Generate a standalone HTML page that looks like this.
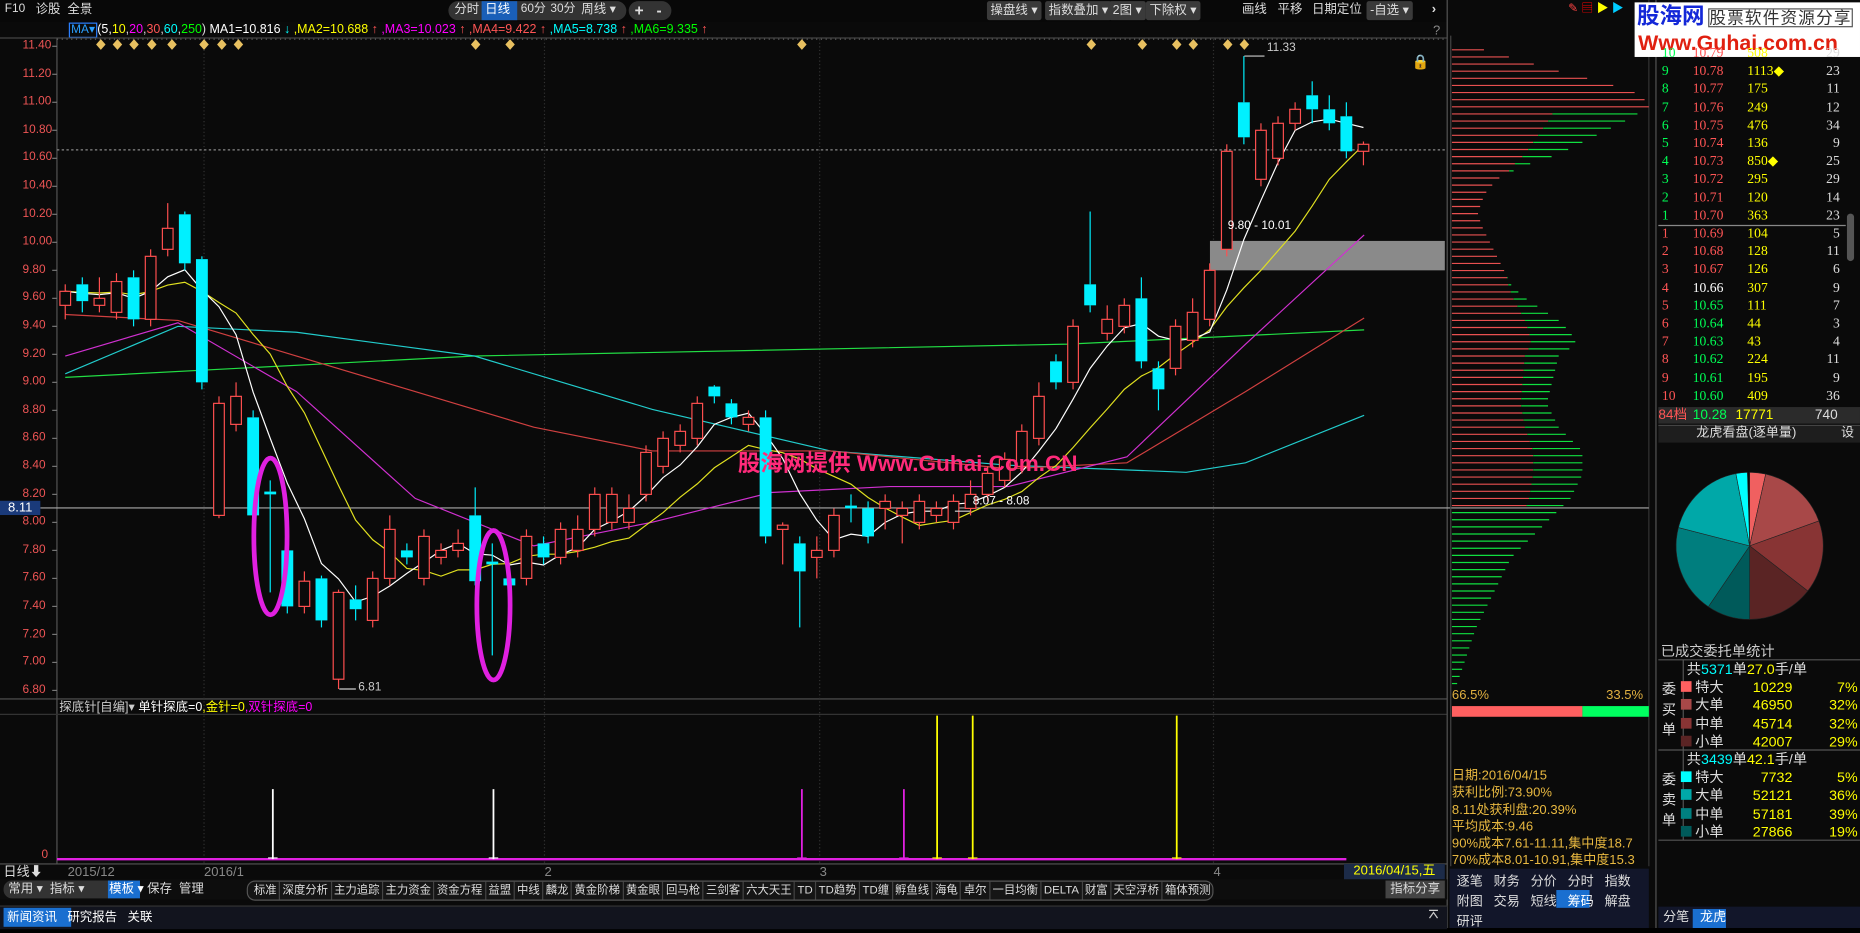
<!DOCTYPE html>
<html><head><meta charset="utf-8">
<style>
html,body{margin:0;padding:0;background:#000;overflow:hidden;width:1860px;height:928px}
#w{position:absolute;left:0;top:0;width:1568px;height:782px;transform:scale(1.18622,1.1867);transform-origin:0 0;background:#0a0a0a;font-family:"Liberation Sans","Noto Sans CJK SC",sans-serif;font-size:11px;color:#ddd}
.a{position:absolute;white-space:nowrap;line-height:1}
.btn{position:absolute;top:1px;height:16px;line-height:16px;background:#3a3a3a;color:#ddd;padding:0 3px;border-radius:2px;font-size:10.5px}
.tab{display:inline-block;border-right:1px solid #444;padding:0 2px;height:15px;line-height:15px}
</style></head><body><div id="w">
<div class="a" style="left:0;top:0;width:1220px;height:18px;background:#080808"></div>
<div class="a" style="left:4px;top:3px;color:#ddd;font-size:10px">F10</div>
<div class="a" style="left:30px;top:3px;font-size:10.5px">诊股&nbsp;&nbsp;全景</div>
<div class="a" style="left:378px;top:1px;width:150px;height:16px;background:#333;border-radius:8px"></div>
<div class="a" style="left:383px;top:3px;font-size:10.5px">分时</div>
<div class="a" style="left:406px;top:1px;width:30px;height:16px;background:#1a5fb8"></div>
<div class="a" style="left:409px;top:3px;color:#fff;font-size:10.5px">日线</div>
<div class="a" style="left:439px;top:3px;font-size:10px">60分</div>
<div class="a" style="left:464px;top:3px;font-size:10px">30分</div>
<div class="a" style="left:490px;top:3px;font-size:10.5px">周线 ▾</div>
<div class="a" style="left:530px;top:1px;width:36px;height:16px;background:#333;border-radius:8px"></div>
<div class="a" style="left:535px;top:2px;font-weight:bold;font-size:13px">+&nbsp;&nbsp;&nbsp;-</div>
<div class="btn" style="left:832px">操盘线 ▾</div>
<div class="btn" style="left:881px">指数叠加 ▾</div>
<div class="btn" style="left:935px">2图 ▾</div>
<div class="btn" style="left:966px">下除权 ▾</div>
<div class="a" style="left:1047px;top:3px;font-size:10.5px">画线</div>
<div class="a" style="left:1077px;top:3px;font-size:10.5px">平移</div>
<div class="a" style="left:1106px;top:3px;font-size:10.5px">日期定位</div>
<div class="btn" style="left:1152px">-自选 ▾</div>
<div class="a" style="left:1207px;top:3px;font-weight:bold">›</div>
<div class="a" style="left:1208px;top:21px;color:#888">?</div>
<div class="a" style="left:58px;top:19px;border:1px solid #2a7fff;color:#2a9fff;padding:0 1px;height:11px;line-height:11px;font-size:10px">MA▾</div>
<div class="a" style="left:82px;top:20px;font-size:10.5px"><span style="color:#fff">(5,</span><span style="color:#ff0">10</span>,<span style="color:#f0f">20</span>,<span style="color:#f55">30</span>,<span style="color:#0ff">60</span>,<span style="color:#0f0">250</span>) <span style="color:#fff">MA1=10.816</span> <span style="color:#0ff">↓</span> <span style="color:#ff0">,MA2=10.688</span> <span style="color:#f55">↑</span> <span style="color:#f0f">,MA3=10.023</span> <span style="color:#f55">↑</span> <span style="color:#f55">,MA4=9.422</span> <span style="color:#f55">↑</span> <span style="color:#0ff">,MA5=8.738</span> <span style="color:#f55">↑</span> <span style="color:#0f0">,MA6=9.335</span> <span style="color:#f55">↑</span></div>

<svg id="sv" class="a" style="left:0;top:0" width="1568" height="782" viewBox="0 0 1568 782"></svg>

<div id="ax"></div>
<div class="a" style="left:0;top:422px;width:34px;height:12px;background:#1a3a7a;color:#fff;text-align:center;line-height:12px">8.11</div>
<div class="a" style="left:1035px;top:186px;color:#fff;font-size:10px">9.80 - 10.01</div>
<div class="a" style="left:820px;top:418px;color:#fff;font-size:10px">8.07 - 8.08</div>
<div class="a" style="left:302px;top:575px;color:#ccc;font-size:10px">6.81</div>
<div class="a" style="left:1068px;top:36px;color:#ccc;font-size:10px">11.33</div>
<div class="a" style="left:622px;top:382px;color:#ff2a7a;font-size:19px;font-weight:bold">股海网提供 Www.Guhai.Com.CN</div>
<div class="a" style="left:1190px;top:46px;color:#fff;font-size:12px">🔒</div>

<div class="a" style="left:50px;top:591px;font-size:10.5px"><span style="color:#ccc">探底针[自编]▾</span> <span style="color:#fff">单针探底=0</span><span style="color:#ff0">,金针=0</span><span style="color:#f0f">,双针探底=0</span></div>
<div class="a" style="left:35px;top:716px;color:#e55;font-size:10px">0</div>
<div class="a" style="left:3px;top:730px">日线⬇</div>
<div class="a" style="left:57px;top:730px;color:#888">2015/12</div>
<div class="a" style="left:172px;top:730px;color:#888">2016/1</div>
<div class="a" style="left:459px;top:730px;color:#888">2</div>
<div class="a" style="left:691px;top:730px;color:#888">3</div>
<div class="a" style="left:1023px;top:730px;color:#888">4</div>
<div class="a" style="left:1133px;top:728px;width:85px;height:13px;background:#1c2b48;color:#ff0;text-align:center;line-height:13px">2016/04/15,五</div>
<div class="a" style="left:0;top:741px;width:1220px;height:17px;background:#0d0d0d"></div>
<div class="a" style="left:3px;top:742px;width:116px;height:15px;background:#333;border-radius:7px"></div>
<div class="a" style="left:7px;top:744px;font-size:10.5px">常用 ▾&nbsp; 指标 ▾</div>
<div class="a" style="left:91px;top:742px;width:27px;height:15px;background:#1a6fd0"></div>
<div class="a" style="left:92px;top:744px;color:#fff;font-size:10.5px">模板 ▾</div>
<div class="a" style="left:124px;top:744px;font-size:10.5px">保存&nbsp; 管理</div>
<div class="a" style="left:208px;top:742px;height:15px;border:1px solid #555;border-radius:7px;background:#151515;font-size:9.6px;color:#ddd;padding-left:3px"><span class="tab">标准</span><span class="tab">深度分析</span><span class="tab">主力追踪</span><span class="tab">主力资金</span><span class="tab">资金方程</span><span class="tab">益盟</span><span class="tab">中线</span><span class="tab">麟龙</span><span class="tab">黄金阶梯</span><span class="tab">黄金眼</span><span class="tab">回马枪</span><span class="tab">三剑客</span><span class="tab">六大天王</span><span class="tab">TD</span><span class="tab">TD趋势</span><span class="tab">TD缠</span><span class="tab">孵鱼线</span><span class="tab">海龟</span><span class="tab">卓尔</span><span class="tab">一目均衡</span><span class="tab">DELTA</span><span class="tab">财富</span><span class="tab">天空浮桥</span><span class="tab" style="border:none">箱体预测</span></div>
<div class="a" style="left:1168px;top:742px;width:50px;height:15px;background:#444;line-height:15px;text-align:center;font-size:10.5px">指标分享</div>
<div class="a" style="left:0;top:763px;width:1220px;height:19px;background:#12141e;border-top:1px solid #333"></div>
<div class="a" style="left:3px;top:765px;width:57px;height:16px;background:#1a6fd0"></div>
<div class="a" style="left:6px;top:768px;color:#fff;font-size:10.5px">新闻资讯&nbsp;&nbsp; 研究报告&nbsp;&nbsp; 关联</div>
<div class="a" style="left:1203px;top:766px;color:#ccc;font-weight:bold">⌅</div>

<div class="a" style="left:1224px;top:581px;color:#e0b040">66.5%</div>
<div class="a" style="left:1354px;top:581px;color:#e0b040">33.5%</div>
<div class="a" style="left:1224px;top:647px;color:#e8b840;font-size:11px;line-height:14.3px">日期:2016/04/15<br>获利比例:73.90%<br>8.11处获利盘:20.39%<br>平均成本:9.46<br>90%成本7.61-11.11,集中度18.7<br>70%成本8.01-10.91,集中度15.3</div>
<div class="a" style="left:1222px;top:732px;width:168px;height:50px;background:#12162a"></div>
<div class="a" style="left:1312px;top:750px;width:28px;height:15px;background:#1a6fd0"></div>
<div class="a" style="left:1228px;top:735px;line-height:17px;font-size:11px">逐笔&nbsp;&nbsp; 财务&nbsp;&nbsp; 分价&nbsp;&nbsp; 分时&nbsp;&nbsp; 指数<br>附图&nbsp;&nbsp; 交易&nbsp;&nbsp; 短线&nbsp;&nbsp; <span style="color:#fff">筹码</span>&nbsp;&nbsp; 解盘<br>研评</div>

<div class="a" style="left:1378px;top:2px;width:190px;height:46px;background:#fff"></div>
<div class="a" style="left:1380px;top:5px;color:#1428d8;font-size:19px;font-weight:bold">股海网</div>
<div class="a" style="left:1440px;top:7px;color:#333;font-size:14px;border:1px solid #555;letter-spacing:1px">股票软件资源分享</div>
<div class="a" style="left:1381px;top:27px;color:#e02010;font-size:18px;font-weight:bold">Www.Guhai.com.cn</div>
<div class="a" style="left:1322px;top:3px;color:#f44;font-size:10px">✎ <span style="color:#f00">▤</span> <span style="color:#ff0">▶</span> <span style="color:#0cf">▶</span></div>

<div id="ob"></div>
<div class="a" style="left:1398px;top:343px;width:170px;height:14px;background:#2b2b2b"></div>
<div class="a" style="left:1398px;top:345px;color:#f55;font-size:11.5px">84档</div>
<div class="a" style="left:1427px;top:345px;color:#0f5;font-size:11.5px">10.28</div>
<div class="a" style="left:1463px;top:345px;color:#ff0;font-size:11.5px">17771</div>
<div class="a" style="left:1530px;top:345px;color:#ddd;font-size:11.5px">740</div>
<div class="a" style="left:1398px;top:358px;width:170px;height:14px;background:#1e1e1e;border-top:1px solid #444"></div>
<div class="a" style="left:1430px;top:360px;color:#ddd">龙虎看盘(逐单量)</div>
<div class="a" style="left:1552px;top:360px;color:#ddd">设</div>
<div class="a" style="left:1400px;top:543px;color:#ccc;font-size:12px">已成交委托单统计</div>
<div id="st"></div>
<div class="a" style="left:1398px;top:764px;width:170px;height:18px;background:#12162a"></div>
<div class="a" style="left:1427px;top:766px;width:28px;height:16px;background:#1a6fd0"></div>
<div class="a" style="left:1402px;top:768px;color:#ddd">分笔&nbsp;&nbsp; <span style="color:#fff">龙虎</span></div>

<script>
var sv=document.getElementById('sv'),h='';
function Y(p){return 39+(11.4-p)*118;}
h+='<rect x="0" y="32" width="1220" height="696" fill="#0a0a0a"/>';
h+='<line x1="48" y1="32" x2="48" y2="728" stroke="#555"/>';
h+='<line x1="0" y1="32" x2="1220" y2="32" stroke="#444"/>';
h+='<line x1="48" y1="33" x2="1218" y2="33" stroke="#666" stroke-dasharray="1,3"/>';
h+='<line x1="0" y1="589" x2="1220" y2="589" stroke="#555"/>';
h+='<line x1="0" y1="602" x2="1220" y2="602" stroke="#333"/>';
h+='<line x1="0" y1="728" x2="1220" y2="728" stroke="#555"/>';
h+='<line x1="1220" y1="0" x2="1220" y2="782" stroke="#555"/>';
h+='<line x1="1396" y1="0" x2="1396" y2="782" stroke="#555"/>';
h+='<line x1="1390" y1="0" x2="1390" y2="730" stroke="#333"/>';
[172,459,691,1023].forEach(function(x){h+='<line x1="'+x+'" y1="33" x2="'+x+'" y2="728" stroke="#333" stroke-dasharray="1,2"/>';});
var ax='';
for(var i=0;i<=23;i++){var p=11.4-i*0.2,y=Y(p);ax+='<div class="a" style="left:19px;top:'+(y-5)+'px;color:#e55;font-size:10px">'+p.toFixed(2)+'</div>';h+='<line x1="44" y1="'+y+'" x2="48" y2="'+y+'" stroke="#777"/>';}
document.getElementById('ax').innerHTML=ax;
h+='<rect x="1020" y="'+Y(10.01)+'" width="198" height="'+(Y(9.8)-Y(10.01))+'" fill="#8a8a8a"/>';
h+='<line x1="48" y1="'+Y(10.66)+'" x2="1218" y2="'+Y(10.66)+'" stroke="#888" stroke-dasharray="2,2"/>';
h+='<line x1="34" y1="428" x2="1390" y2="428" stroke="#aaa"/>';
var C=[[9.55,9.65,9.7,9.45],[9.7,9.58,9.75,9.5],[9.55,9.6,9.75,9.5],[9.5,9.72,9.78,9.45],[9.75,9.45,9.8,9.4],[9.45,9.9,9.95,9.4],[9.95,10.1,10.28,9.9],[10.2,9.85,10.22,9.8],[9.88,9.0,9.9,8.95],[8.05,8.85,8.9,8.03],[8.7,8.9,9.0,8.65],[8.75,8.05,8.8,8.0],[8.22,8.2,8.3,7.5],[7.8,7.4,7.85,7.35],[7.4,7.58,7.65,7.35],[7.6,7.3,7.62,7.25],[6.88,7.5,7.52,6.81],[7.45,7.38,7.55,7.3],[7.3,7.6,7.65,7.25],[7.6,7.95,8.05,7.55],[7.8,7.75,7.85,7.7],[7.6,7.9,7.95,7.55],[7.75,7.8,7.85,7.7],[7.8,7.85,7.95,7.75],[8.05,7.58,8.25,7.55],[7.72,7.7,7.85,7.05],[7.6,7.55,7.65,7.45],[7.6,7.9,7.95,7.55],[7.85,7.75,7.9,7.7],[7.75,7.95,8.0,7.7],[7.8,7.95,8.05,7.75],[7.95,8.2,8.25,7.9],[8.0,8.2,8.25,7.95],[8.0,8.1,8.2,7.95],[8.2,8.5,8.55,8.15],[8.4,8.6,8.65,8.35],[8.55,8.65,8.7,8.5],[8.6,8.85,8.9,8.55],[8.97,8.9,8.98,8.85],[8.85,8.75,8.88,8.7],[8.7,8.75,8.8,8.65],[8.75,7.9,8.8,7.85],[7.95,7.98,8.0,7.7],[7.85,7.65,7.9,7.25],[7.75,7.8,7.9,7.6],[7.8,8.05,8.1,7.75],[8.12,8.1,8.2,8.0],[8.1,7.9,8.15,7.85],[8.1,8.15,8.2,7.95],[8.05,8.1,8.15,7.85],[8.0,8.15,8.2,7.95],[8.05,8.1,8.15,8.0],[8.0,8.15,8.2,7.95],[8.1,8.2,8.3,8.05],[8.2,8.35,8.4,8.15],[8.3,8.45,8.5,8.25],[8.4,8.65,8.7,8.35],[8.6,8.9,9.0,8.55],[9.15,9.0,9.2,8.95],[9.0,9.4,9.45,8.95],[9.7,9.55,10.22,9.5],[9.35,9.45,9.55,9.3],[9.4,9.55,9.6,9.35],[9.6,9.15,9.75,9.1],[9.1,8.95,9.15,8.8],[9.1,9.4,9.45,9.05],[9.3,9.5,9.6,9.25],[9.45,9.8,9.85,9.4],[9.95,10.65,10.7,9.9],[11.0,10.75,11.33,10.7],[10.45,10.8,10.85,10.4],[10.6,10.85,10.9,10.55],[10.85,10.95,11.0,10.8],[11.05,10.95,11.15,10.85],[10.95,10.85,11.05,10.8],[10.9,10.65,11.0,10.6],[10.65,10.7,10.72,10.55]];
function X(i){return 55+14.4*i;}
function pl(pts,col){h+='<polyline fill="none" stroke="'+col+'" stroke-width="1" points="'+pts.map(function(p){return p[0]+','+p[1]}).join(' ')+'"/>';}
pl([[55,318],[400,300],[900,290],[1150,278]],'#22dd44');
pl([[55,315],[150,275],[250,280],[400,300],[550,345],[700,380],[850,392],[1000,398],[1050,390],[1150,350]],'#22cccc');
pl([[55,265],[150,270],[250,300],[350,330],[450,360],[550,380],[700,380],[850,395],[950,390],[1050,330],[1150,268]],'#d04040');
pl([[55,300],[150,272],[250,330],[350,420],[450,460],[550,440],[650,415],[750,410],[850,410],[950,385],[1050,290],[1150,198]],'#d030d0');
function ma(n){var pts=[];for(var i=0;i<C.length;i++){var s=0;for(var k=0;k<n;k++){var j=i-k;s+=C[Math.max(j,0)][1];}pts.push([X(i),Y(s/n)]);}return pts;}
pl(ma(10),'#e0e020');pl(ma(5),'#ffffff');
C.forEach(function(c,i){var x=X(i),o=c[0],cl=c[1],up=cl>=o,col=up?'#ff4f4f':'#00f0ff';
var t=Y(Math.max(o,cl)),b=Y(Math.min(o,cl));if(b-t<1)b=t+1;
h+='<line x1="'+x+'" y1="'+Y(c[2])+'" x2="'+x+'" y2="'+t+'" stroke="'+col+'"/>';
h+='<line x1="'+x+'" y1="'+b+'" x2="'+x+'" y2="'+Y(c[3])+'" stroke="'+col+'"/>';
if(up)h+='<rect x="'+(x-4.5)+'" y="'+t+'" width="9" height="'+(b-t)+'" fill="#0a0a0a" stroke="'+col+'"/>';
else h+='<rect x="'+(x-5)+'" y="'+t+'" width="10" height="'+(b-t)+'" fill="'+col+'"/>';});
h+='<line x1="286" y1="'+Y(6.81)+'" x2="300" y2="'+Y(6.81)+'" stroke="#ccc"/>';
h+='<line x1="1049" y1="'+Y(11.33)+'" x2="1066" y2="'+Y(11.33)+'" stroke="#ccc"/>';
h+='<line x1="805" y1="'+Y(8.08)+'" x2="818" y2="'+Y(8.08)+'" stroke="#ccc"/>';
[85,99,113,128,145,172,187,201,401,430,676,920,963,992,1006,1035,1049].forEach(function(x){h+='<polygon points="'+x+',33 '+(x+4)+',37.5 '+x+',42 '+(x-4)+',37.5" fill="#e8c060"/>';});
h+='<ellipse cx="228" cy="452" rx="14" ry="66" fill="none" stroke="#e020e0" stroke-width="4"/>';
h+='<ellipse cx="416" cy="510" rx="14" ry="63" fill="none" stroke="#e020e0" stroke-width="4"/>';
h+='<line x1="48" y1="724" x2="1135" y2="724" stroke="#e020e0" stroke-width="2"/>';
[[230,665,'#fff'],[416,665,'#fff'],[676,665,'#e020e0'],[762,665,'#e020e0'],[790,603,'#ff0'],[820,603,'#ff0'],[992,603,'#ff0']].forEach(function(b){h+='<line x1="'+b[0]+'" y1="'+b[1]+'" x2="'+b[0]+'" y2="724" stroke="'+b[2]+'" stroke-width="1.5"/>';h+='<line x1="'+(b[0]-4)+'" y1="723" x2="'+(b[0]+4)+'" y2="723" stroke="'+b[2]+'"/>';});
var prof=[[40,20],[50,55],[60,90],[70,130],[80,160],[90,166],[100,150],[110,130],[120,110],[130,90],[140,60],[150,40],[160,30],[170,25],[180,22],[190,25],[200,30],[210,35],[220,40],[230,45],[240,50],[250,60],[260,75],[270,90],[280,100],[290,105],[300,90],[320,85],[340,80],[360,90],[380,110],[400,110],[420,100],[430,90],[450,70],[470,50],[500,35],[530,20],[560,10],[580,3]];
function L(y){for(var k=0;k<prof.length-1;k++){if(y>=prof[k][0]&&y<=prof[k+1][0]){var f=(y-prof[k][0])/(prof[k+1][0]-prof[k][0]);return prof[k][1]+f*(prof[k+1][1]-prof[k][1]);}}return 0;}
h+='<line x1="1223" y1="30" x2="1223" y2="730" stroke="#444"/>';
for(var y=42;y<=580;y+=6){var l=L(y),r=y<92?l:(y<428?Math.min(l,30+l*0.35):0);
if(r>0)h+='<line x1="1224" y1="'+y+'" x2="'+(1224+r)+'" y2="'+y+'" stroke="#e85050"/>';
if(l>r)h+='<line x1="'+(1224+r)+'" y1="'+y+'" x2="'+(1224+l)+'" y2="'+y+'" stroke="#10e040"/>';}
h+='<rect x="1224" y="595" width="110" height="9" fill="#ff6060"/><rect x="1334" y="595" width="56" height="9" fill="#00ff60"/>';
h+='<rect x="1557" y="180" width="6" height="40" rx="3" fill="#555"/>';
var sl=[[3.5,'#f06060'],[16,'#a84848'],[16,'#883434'],[14.5,'#5a2424'],[9.5,'#005a5a'],[19.5,'#007e7e'],[18,'#00a8a8'],[2.5,'#00ffff']];
var a0=-Math.PI/2,cx=1475,cy=460,R=62;
sl.forEach(function(s){var a1=a0+s[0]/100*2*Math.PI;var x0=cx+R*Math.cos(a0),y0=cy+R*Math.sin(a0),x1=cx+R*Math.cos(a1),y1=cy+R*Math.sin(a1);h+='<path d="M'+cx+','+cy+' L'+x0+','+y0+' A'+R+','+R+' 0 '+((a1-a0)>Math.PI?1:0)+',1 '+x1+','+y1+' Z" fill="'+s[1]+'" stroke="#222" stroke-width="0.5"/>';a0=a1;});
h+='<line x1="1398" y1="190" x2="1556" y2="190" stroke="#888"/>';
h+='<line x1="1398" y1="556" x2="1568" y2="556" stroke="#555"/><line x1="1398" y1="632" x2="1568" y2="632" stroke="#555"/><line x1="1398" y1="708" x2="1568" y2="708" stroke="#555"/><line x1="1419" y1="556" x2="1419" y2="708" stroke="#555"/>';
sv.innerHTML=h;
var sell=[[10,'10.79',508,29],[9,'10.78','1113◆',23],[8,'10.77',175,11],[7,'10.76',249,12],[6,'10.75',476,34],[5,'10.74',136,9],[4,'10.73','850◆',25],[3,'10.72',295,29],[2,'10.71',120,14],[1,'10.70',363,23]];
var buy=[[1,'10.69',104,5,'#f55'],[2,'10.68',128,11,'#f55'],[3,'10.67',126,6,'#f55'],[4,'10.66',307,9,'#fff'],[5,'10.65',111,7,'#0f5'],[6,'10.64',44,3,'#0f5'],[7,'10.63',43,4,'#0f5'],[8,'10.62',224,11,'#0f5'],[9,'10.61',195,9,'#0f5'],[10,'10.60',409,36,'#0f5']];
var o='';
function row(y,n,nc,p,pc,v,c){o+='<div class="a" style="left:1401px;top:'+y+'px;color:'+nc+';font-size:11.5px;font-family:Liberation Serif,serif">'+n+'</div><div class="a" style="left:1427px;top:'+y+'px;color:'+pc+';font-size:11.5px;font-family:Liberation Serif,serif">'+p+'</div><div class="a" style="left:1473px;top:'+y+'px;color:#ff0;font-size:11.5px;font-family:Liberation Serif,serif">'+v+'</div><div class="a" style="left:1520px;width:31px;text-align:right;top:'+y+'px;color:#ddd;font-size:11.5px;font-family:Liberation Serif,serif">'+c+'</div>';}
sell.forEach(function(s,i){row(40+i*15.2,s[0],'#0f5',s[1],'#f55',s[2],s[3]);});
buy.forEach(function(s,i){row(192+i*15.2,s[0],'#f55',s[1],s[4],s[2],s[3]);});
document.getElementById('ob').innerHTML=o;
var st='',rows=[['#ff6060','特大','10229','7%'],['#a84848','大单','46950','32%'],['#883434','中单','45714','32%'],['#5a2424','小单','42007','29%'],['#00ffff','特大','7732','5%'],['#00a8a8','大单','52121','36%'],['#008080','中单','57181','39%'],['#005a5a','小单','27866','19%']];
st+='<div class="a" style="left:1422px;top:558px;color:#ddd;font-size:12px">共<span style="color:#0ff">5371</span>单<span style="color:#ff0">27.0</span>手/单</div>';
st+='<div class="a" style="left:1422px;top:634px;color:#ddd;font-size:12px">共<span style="color:#0ff">3439</span>单<span style="color:#ff0">42.1</span>手/单</div>';
st+='<div class="a" style="left:1401px;top:573px;color:#ddd;font-size:12px;line-height:17px">委<br>买<br>单</div><div class="a" style="left:1401px;top:649px;color:#ddd;font-size:12px;line-height:17px">委<br>卖<br>单</div>';
rows.forEach(function(r,i){var y=(i<4?573:649)+(i%4)*15.3;st+='<div class="a" style="left:1417px;top:'+(y+1)+'px;width:9px;height:9px;background:'+r[0]+'"></div><div class="a" style="left:1429px;top:'+y+'px;color:#ddd;font-size:12px">'+r[1]+'</div><div class="a" style="left:1460px;width:51px;text-align:right;top:'+y+'px;color:#ff0;font-size:12px">'+r[2]+'</div><div class="a" style="left:1530px;width:36px;text-align:right;top:'+y+'px;color:#ff0;font-size:12px">'+r[3]+'</div>';});
document.getElementById('st').innerHTML=st;
</script>
</div></body></html>
